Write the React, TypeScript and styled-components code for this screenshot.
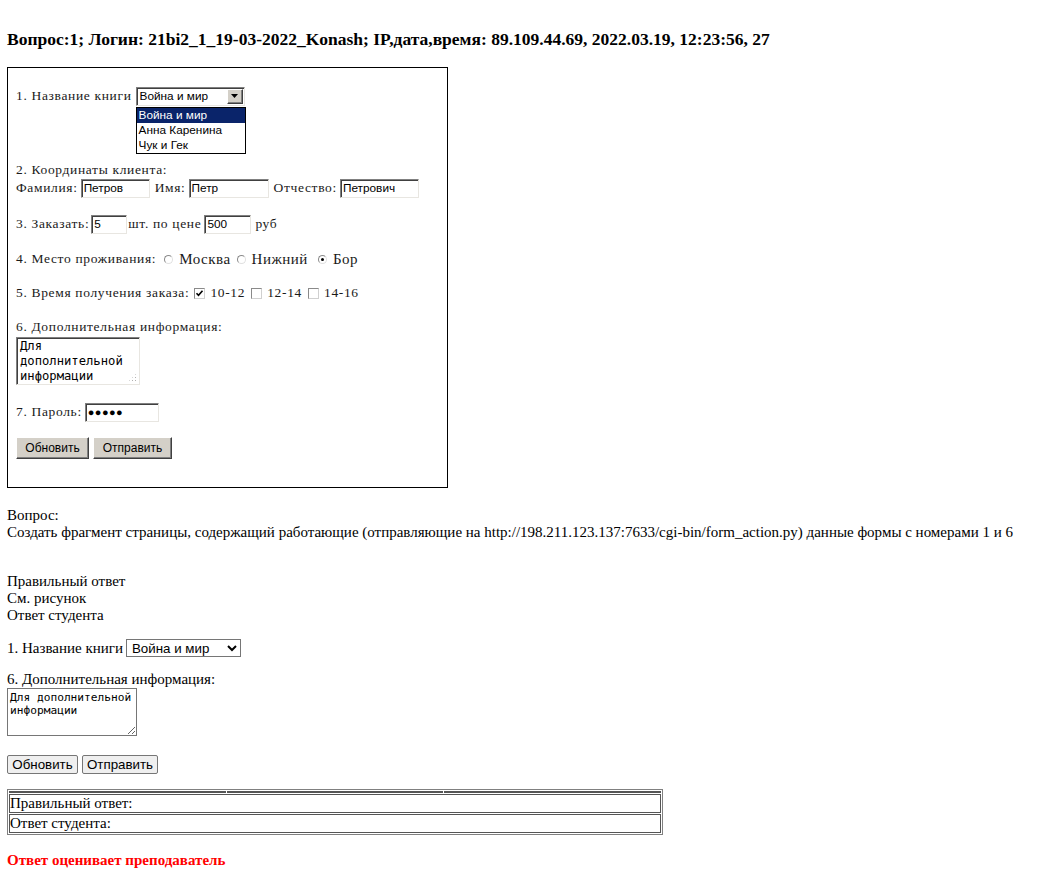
import React from "react";
import styled, { createGlobalStyle } from "styled-components";

const Global = createGlobalStyle`
  html, body { margin: 0; padding: 0; background: #fff; }
  body { font-family: "Liberation Serif", "Times New Roman", serif; font-size: 15px; color: #000; }
`;

const Page = styled.div`
  padding: 0 7px 10px 7px;
`;

const Heading = styled.h4`
  margin: 29px 0 0 0;
  font-size: 17.5px;
  line-height: 20px;
  font-weight: bold;
  white-space: nowrap;
`;

/* ---------- old-style (picture) form ---------- */
const Shot = styled.div`
  margin-top: 18px;
  width: 441px;
  height: 421px;
  box-sizing: border-box;
  border: 1px solid #000;
  padding: 18px 0 0 8px;
  font-family: "Liberation Serif", "Times New Roman", serif;
  font-size: 13.5px;
  letter-spacing: 0.66px;
  color: #1a1a1a;
`;

const Row = styled.div<{ $mt: number; $h?: number }>`
  display: flex;
  align-items: center;
  height: ${(p) => p.$h ?? 20}px;
  margin-top: ${(p) => p.$mt}px;
  white-space: nowrap;
`;

const Txt = styled.span<{ $ml?: number }>`
  margin-left: ${(p) => p.$ml ?? 0}px;
`;

const Choice = styled.span`
  font-size: 15px;
  letter-spacing: 0.5px;
`;

const sunken = `
  background: #fff;
  border-top: 1px solid #808080;
  border-left: 1px solid #808080;
  border-right: 1px solid #e8e6e1;
  border-bottom: 1px solid #e8e6e1;
  box-shadow: inset 1px 1px 0 #404040;
`;

const OldField = styled.span<{ $w: number; $ml?: number }>`
  display: inline-flex;
  align-items: center;
  box-sizing: border-box;
  width: ${(p) => p.$w}px;
  height: 19px;
  margin-left: ${(p) => p.$ml ?? 0}px;
  padding-left: 2px;
  ${sunken}
  font-family: "Liberation Sans", Arial, sans-serif;
  font-size: 11.8px;
  letter-spacing: 0;
  color: #000;
`;

const Dots = styled.span`
  font-size: 11px;
  letter-spacing: 0.4px;
`;

const SelectWrap = styled.span<{ $ml?: number }>`
  position: relative;
  display: inline-flex;
  margin-left: ${(p) => p.$ml ?? 0}px;
`;

const OldSelectBox = styled.span`
  display: inline-flex;
  align-items: center;
  justify-content: space-between;
  box-sizing: border-box;
  width: 109px;
  height: 19px;
  padding: 0 1px 0 3px;
  ${sunken}
  font-family: "Liberation Sans", Arial, sans-serif;
  font-size: 11.8px;
  letter-spacing: 0;
  color: #000;
`;

const OldArrowBtn = styled.span`
  display: inline-flex;
  align-items: center;
  justify-content: center;
  box-sizing: border-box;
  width: 16px;
  height: 15px;
  background: #d4d0c8;
  border-top: 1px solid #fff;
  border-left: 1px solid #fff;
  border-right: 1px solid #404040;
  border-bottom: 1px solid #404040;
  box-shadow: inset -1px -1px 0 #808080;
`;

const DropList = styled.div`
  position: absolute;
  left: 0;
  top: 20px;
  width: 110px;
  box-sizing: border-box;
  border: 1px solid #000;
  background: #fff;
  font-family: "Liberation Sans", Arial, sans-serif;
  font-size: 11.8px;
  letter-spacing: 0;
  color: #000;
  z-index: 2;
`;

const DropItem = styled.div<{ $sel?: boolean }>`
  height: 15px;
  line-height: 15px;
  padding-left: 2px;
  background: ${(p) => (p.$sel ? "#0a246a" : "#fff")};
  color: ${(p) => (p.$sel ? "#fff" : "#000")};
`;

const Radio = styled.span<{ $on?: boolean; $ml?: number }>`
  position: relative;
  display: inline-block;
  box-sizing: border-box;
  width: 9px;
  height: 9px;
  margin: 0 6px 0 ${(p) => p.$ml ?? 0}px;
  border-radius: 50%;
  border: 1px solid #8a8a8a;
  border-bottom-color: #e0e0e0;
  border-right-color: #e0e0e0;
  background: #fff;
  &::after {
    content: "";
    display: ${(p) => (p.$on ? "block" : "none")};
    position: absolute;
    left: 2px;
    top: 2px;
    width: 3px;
    height: 3px;
    border-radius: 50%;
    background: #000;
  }
`;

const Check = styled.span<{ $ml?: number }>`
  display: inline-flex;
  align-items: center;
  justify-content: center;
  box-sizing: border-box;
  width: 11px;
  height: 11px;
  margin: 0 5px 0 ${(p) => p.$ml ?? 0}px;
  border: 1px solid #8a8a8a;
  border-bottom-color: #d0d0d0;
  border-right-color: #d0d0d0;
  background: #fff;
`;

const OldArea = styled.div`
  position: relative;
  box-sizing: border-box;
  width: 124px;
  height: 48px;
  margin-top: 2px;
  padding: 1px 0 0 3px;
  ${sunken}
  font-family: "DejaVu Sans Mono", "Liberation Mono", monospace;
  font-size: 12.2px;
  letter-spacing: 0;
  line-height: 15px;
  white-space: pre;
  color: #000;
`;

const Grip = styled.span`
  position: absolute;
  right: 2px;
  bottom: 2px;
  width: 9px;
  height: 9px;
  background:
    radial-gradient(circle, #b0b0b0 0.8px, transparent 1px) 0 0 / 3px 3px;
  clip-path: polygon(100% 0, 100% 100%, 0 100%);
`;

const OldButtons = styled.div`
  display: flex;
  gap: 4px;
  margin-top: 15px;
`;

const OldButton = styled.span<{ $w: number }>`
  display: inline-flex;
  align-items: center;
  justify-content: center;
  box-sizing: border-box;
  width: ${(p) => p.$w}px;
  height: 22px;
  background: #d4d0c8;
  border-top: 1px solid #fff;
  border-left: 1px solid #fff;
  border-right: 1px solid #404040;
  border-bottom: 1px solid #404040;
  box-shadow: inset -1px -1px 0 #808080;
  font-family: "Liberation Sans", Arial, sans-serif;
  font-size: 12px;
  letter-spacing: 0;
  color: #000;
`;

/* ---------- lower text and the real form ---------- */
const Lines = styled.div`
  margin-top: 19px;
  line-height: 16.6px;
  white-space: nowrap;
`;

const Blank = styled.div`
  height: 16.6px;
`;

const FormRow = styled.div<{ $mt: number }>`
  display: flex;
  align-items: center;
  margin-top: ${(p) => p.$mt}px;
  line-height: 17px;
  white-space: nowrap;
`;

const NewSelect = styled.select`
  margin-left: 3px;
  width: 115px;
  height: 18px;
  box-sizing: border-box;
  padding: 0 0 0 1px;
  border: 1px solid #767676;
  border-radius: 0;
  background: #fff;
  font-family: "Liberation Sans", Arial, sans-serif;
  font-size: 13.33px;
  color: #000;
`;

const NewArea = styled.textarea`
  display: block;
  width: 130px;
  height: 48px;
  box-sizing: border-box;
  margin: 0;
  padding: 2px;
  border: 1px solid #767676;
  border-radius: 0;
  font-family: "DejaVu Sans Mono", "Liberation Mono", monospace;
  font-size: 11.2px;
  line-height: 13px;
  white-space: pre;
  overflow: hidden;
  color: #000;
`;

const ButtonRow = styled.div`
  display: flex;
  gap: 4px;
  margin-top: 19px;
`;

const NewButton = styled.button<{ $w: number }>`
  width: ${(p) => p.$w}px;
  height: 19px;
  box-sizing: border-box;
  padding: 0;
  background: #efefef;
  border: 1px solid #767676;
  border-radius: 2px;
  font-family: "Liberation Sans", Arial, sans-serif;
  font-size: 13.33px;
  color: #000;
`;

const Result = styled.table`
  margin-top: 15px;
  width: 656px;
  border: 1px solid #808080;
  border-spacing: 1px;
  border-collapse: separate;
`;

const Cell = styled.td`
  border: 1px solid #555;
  padding: 0;
  line-height: 17px;
  font-size: 15px;
`;

const EmptyCell = styled.td`
  border: 1px solid #555;
  padding: 0;
  height: 0;
  width: 33.33%;
  line-height: 0;
  font-size: 0;
`;

const Verdict = styled.div`
  margin-top: 16px;
  color: #ff0000;
  font-weight: bold;
  font-size: 15px;
  line-height: 18px;
`;

const TriDown = () => (
  <svg width="7" height="4" viewBox="0 0 7 4">
    <path d="M0 0h7L3.5 4z" fill="#000" />
  </svg>
);

const Tick = () => (
  <svg width="9" height="9" viewBox="0 0 9 9">
    <path d="M1.5 4.2 L3.5 6.3 L7.5 1.8" fill="none" stroke="#000" strokeWidth="1.6" />
  </svg>
);

export default function App() {
  return (
    <>
      <Global />
      <Page>
        <Heading>
          Вопрос:1; Логин: 21bi2_1_19-03-2022_Konash; IP,дата,время: 89.109.44.69, 2022.03.19, 12:23:56, 27
        </Heading>

        <Shot>
          <Row $mt={0}>
            <Txt>1. Название книги</Txt>
            <SelectWrap $ml={4}>
              <OldSelectBox>
                Война и мир
                <OldArrowBtn>
                  <TriDown />
                </OldArrowBtn>
              </OldSelectBox>
              <DropList>
                <DropItem $sel>Война и мир</DropItem>
                <DropItem>Анна Каренина</DropItem>
                <DropItem>Чук и Гек</DropItem>
              </DropList>
            </SelectWrap>
          </Row>

          <Row $mt={56} $h={16}>
            <Txt>2. Координаты клиента:</Txt>
          </Row>
          <Row $mt={0}>
            <Txt>Фамилия:</Txt>
            <OldField $w={69} $ml={3}>Петров</OldField>
            <Txt $ml={5}>Имя:</Txt>
            <OldField $w={80} $ml={3}>Петр</OldField>
            <Txt $ml={5}>Отчество:</Txt>
            <OldField $w={79} $ml={3}>Петрович</OldField>
          </Row>

          <Row $mt={16}>
            <Txt>3. Заказать:</Txt>
            <OldField $w={36} $ml={2}>5</OldField>
            <Txt $ml={1}>шт. по цене</Txt>
            <OldField $w={47} $ml={3}>500</OldField>
            <Txt $ml={4}>руб</Txt>
          </Row>

          <Row $mt={15}>
            <Txt>4. Место проживания:</Txt>
            <Radio $ml={8} />
            <Choice>Москва</Choice>
            <Radio $ml={6} />
            <Choice>Нижний</Choice>
            <Radio $ml={10} $on />
            <Choice>Бор</Choice>
          </Row>

          <Row $mt={14}>
            <Txt>5. Время получения заказа:</Txt>
            <Check $ml={5}>
              <Tick />
            </Check>
            <Txt>10-12</Txt>
            <Check $ml={6} />
            <Txt>12-14</Txt>
            <Check $ml={6} />
            <Txt>14-16</Txt>
          </Row>

          <Row $mt={16} $h={16}>
            <Txt>6. Дополнительная информация:</Txt>
          </Row>
          <OldArea>
            {"Для\nдополнительной\nинформации"}
            <Grip />
          </OldArea>

          <Row $mt={17}>
            <Txt>7. Пароль:</Txt>
            <OldField $w={74} $ml={3}>
              <Dots>●●●●●</Dots>
            </OldField>
          </Row>

          <OldButtons>
            <OldButton $w={73}>Обновить</OldButton>
            <OldButton $w={79}>Отправить</OldButton>
          </OldButtons>
        </Shot>

        <Lines>
          <div>Вопрос:</div>
          <div>
            Создать фрагмент страницы, содержащий работающие (отправляющие на
            http://198.211.123.137:7633/cgi-bin/form_action.py) данные формы с номерами 1 и 6
          </div>
          <Blank />
          <Blank />
          <div>Правильный ответ</div>
          <div>См. рисунок</div>
          <div>Ответ студента</div>
        </Lines>

        <FormRow $mt={16}>
          <span>1. Название книги</span>
          <NewSelect defaultValue="war">
            <option value="war">Война и мир</option>
            <option value="anna">Анна Каренина</option>
            <option value="chuk">Чук и Гек</option>
          </NewSelect>
        </FormRow>

        <FormRow $mt={14}>
          <span>6. Дополнительная информация:</span>
        </FormRow>
        <NewArea wrap="off" defaultValue={"Для дополнительной\nинформации"} />

        <ButtonRow>
          <NewButton $w={71}>Обновить</NewButton>
          <NewButton $w={76}>Отправить</NewButton>
        </ButtonRow>

        <Result>
          <tbody>
            <tr>
              <EmptyCell />
              <EmptyCell />
              <EmptyCell />
            </tr>
            <tr>
              <Cell colSpan={3}>Правильный ответ:</Cell>
            </tr>
            <tr>
              <Cell colSpan={3}>Ответ студента:</Cell>
            </tr>
          </tbody>
        </Result>

        <Verdict>Ответ оценивает преподаватель</Verdict>
      </Page>
    </>
  );
}
